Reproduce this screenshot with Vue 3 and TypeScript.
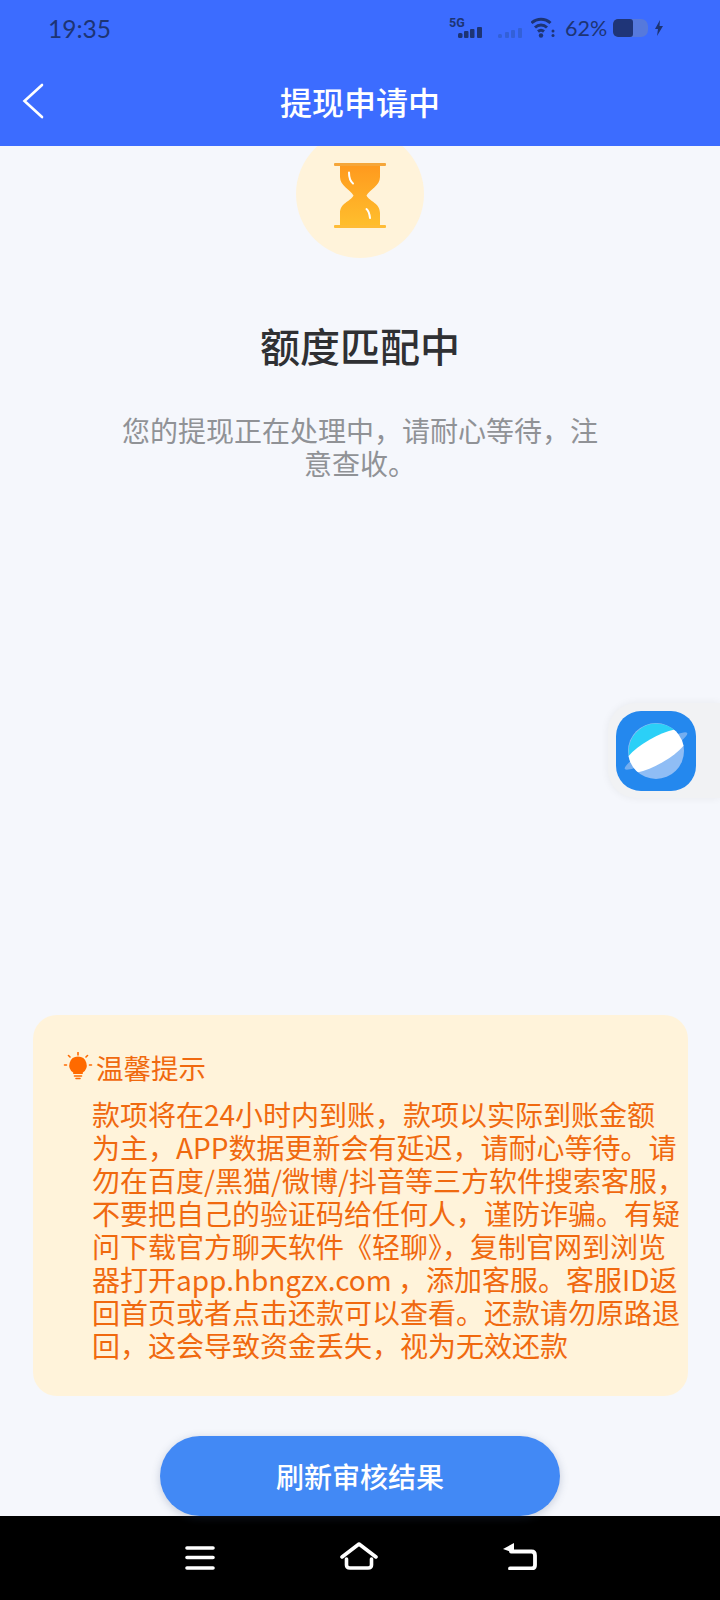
<script setup lang="ts">
const tipLines: string[] = [
  '款项将在24小时内到账，款项以实际到账金额',
  '为主，APP数据更新会有延迟，请耐心等待。请',
  '勿在百度/黑猫/微博/抖音等三方软件搜索客服，',
  '不要把自己的验证码给任何人，谨防诈骗。有疑',
  '问下载官方聊天软件《轻聊》，复制官网到浏览',
  '器打开app.hbngzx.com ，添加客服。客服ID返',
  '回首页或者点击还款可以查看。还款请勿原路退',
  '回，这会导致资金丢失，视为无效还款',
]
</script>

<template>
  <div class="page">
    <header class="top">
      <div class="status">
        <span class="time">19:35</span>
        <div class="status-right">
          <svg class="sig" width="34" height="24" viewBox="0 0 34 24">
            <text x="0" y="11" class="five-g">5G</text>
            <g fill="#1d3474">
              <rect x="9" y="17" width="4.500" height="5" rx="1.500"/>
              <rect x="15" y="15" width="4.500" height="7" rx="1"/>
              <rect x="21" y="13" width="4.500" height="9" rx="1"/>
              <rect x="28" y="11" width="5" height="11" rx="1"/>
            </g>
          </svg>
          <svg class="sig2" width="24" height="24" viewBox="0 0 24 24" fill="#3360d8">
            <rect x="0" y="18" width="4" height="4" rx="1.500"/>
            <rect x="7" y="16" width="4" height="6" rx="1"/>
            <rect x="13" y="14" width="4" height="8" rx="1"/>
            <rect x="20" y="12" width="4" height="10" rx="1"/>
          </svg>
          <svg class="wifi" width="24" height="24" viewBox="0 0 24 24" fill="none" stroke="#1d3474" stroke-width="3">
            <path d="M0.500 7C6 2 14 2 19.500 7"/>
            <path d="M4 11.500C7.500 8.300 12.500 8.300 16 11.500"/>
            <path d="M7 15.500C8.800 14 11.200 14 13 15.500"/>
            <circle cx="10" cy="19.500" r="2.200" fill="#1d3474" stroke="none"/>
            <circle cx="22" cy="15" r="1.500" fill="#1d3474" stroke="none"/>
            <circle cx="22" cy="19.500" r="1.500" fill="#1d3474" stroke="none"/>
          </svg>
          <span class="pct">62%</span>
          <div class="battery"><div class="battery-fill"></div></div>
          <svg class="bolt" width="8" height="16" viewBox="0 0 8 16"><path d="M5 0 0 9h3l-1 7 6-10H4.500z" fill="#1d3474"/></svg>
        </div>
      </div>
      <div class="nav">
        <svg class="back" width="24" height="36" viewBox="0 0 24 36" fill="none" stroke="#fff" stroke-width="2.600" stroke-linecap="round">
          <path d="M21 2 3.500 18 21 34"/>
        </svg>
        <h1 class="nav-title">提现申请中</h1>
      </div>
    </header>

    <main class="body">
      <div class="hero">
        <div class="disc">
          <svg class="glass" width="52" height="66" viewBox="0 0 52 66">
            <defs>
              <linearGradient id="glass" x1="0" y1="0" x2="0" y2="1">
                <stop offset="0" stop-color="#ff9a1e"/>
                <stop offset="1" stop-color="#ffbe2d"/>
              </linearGradient>
            </defs>
            <rect x="0" y="0" width="52" height="3" rx="1" fill="#f5a63a"/>
            <rect x="0" y="62" width="52" height="3" rx="1" fill="#ffbc36"/>
            <path d="M6 3H46V14C46 23 36 26 32.500 32.500C36 39 46 40 46 50V62H6V50C6 40 16 39 19.500 32.500C16 26 6 23 6 14Z" fill="url(#glass)"/>
            <path d="M15 9.500C15 14 16 18 19 20.500" stroke="#fff" stroke-width="2" fill="none" stroke-linecap="round"/>
            <path d="M32.500 46C35 48 35.500 51 36 55" stroke="#fff" stroke-width="2" fill="none" stroke-linecap="round"/>
          </svg>
        </div>
        <h2 class="title">额度匹配中</h2>
        <p class="desc">您的提现正在处理中，请耐心等待，注意查收。</p>
      </div>

      <section class="tip">
        <div class="tip-head">
          <svg width="30" height="30" viewBox="0 0 30 30">
            <g stroke="#ff6a00" stroke-width="1.600" stroke-linecap="round" fill="none">
              <path d="M15 0.500V3M5.500 3.500 7 5M24.500 3.500 23 5M1.500 13H3.500M26.500 13H28.500M11.500 24H18.500M13 26.500H17"/>
            </g>
            <path d="M15 4.500a8.800 8.800 0 0 1 4.800 16.100V22H10.200v-1.400A8.800 8.800 0 0 1 15 4.500z" fill="#ff6a00"/>
          </svg>
          <span class="tip-title">温馨提示</span>
        </div>
        <div class="tip-text">
          <div v-for="line in tipLines" :key="line" class="tip-line">{{ line }}</div>
        </div>
      </section>

      <div class="action"><button class="refresh">刷新审核结果</button></div>

      <aside class="float">
        <div class="app-icon">
          <svg width="80" height="80" viewBox="0 0 80 80">
            <defs>
              <clipPath id="planet"><circle cx="40" cy="40" r="28"/></clipPath>
            </defs>
            <rect width="80" height="80" rx="25" fill="#2488ee"/>
            <g transform="rotate(-30 40 40)">
              <ellipse cx="40" cy="40" rx="36" ry="6" fill="#74aef0"/>
            </g>
            <circle cx="40" cy="40" r="28" fill="#8fbdf5"/>
            <path d="M15.500 53A28 28 0 0 1 59 19.500z" fill="#2bd0f7"/>
            <g clip-path="url(#planet)">
              <g transform="rotate(-30 40 40)">
                <ellipse cx="40" cy="40" rx="38" ry="13" fill="#fff"/>
              </g>
            </g>
          </svg>
        </div>
      </aside>
    </main>

    <footer class="sysbar">
      <svg width="30" height="28" viewBox="0 0 30 28" fill="none" stroke="#fff" stroke-width="3.600" stroke-linecap="round">
        <path d="M2 6H28M2 15.500H28M2 26H28"/>
      </svg>
      <svg width="38" height="28" viewBox="0 0 38 28" fill="none" stroke="#fff" stroke-width="3.600" stroke-linecap="round" stroke-linejoin="round">
        <path d="M2 15 19 2 36 15M6.500 17V23Q6.500 26 10 26H28Q31.500 26 31.500 23V17"/>
      </svg>
      <svg width="34" height="28" viewBox="0 0 34 28" fill="none">
        <path d="M8 9.500H28.500Q32 9.500 32 13.500V23Q32 26.500 28.500 26.500H7" stroke="#fff" stroke-width="3.800" stroke-linecap="round" stroke-linejoin="round"/>
        <path d="M0 7 11 1V11Z" fill="#fff"/>
      </svg>
    </footer>
  </div>
</template>

<style>
html, body { margin: 0; padding: 0; }
</style>

<style scoped>
.page {
  width: 720px;
  height: 1600px;
  display: flex;
  flex-direction: column;
  overflow: hidden;
  background: #f5f7fc;
  font-family: "Noto Sans CJK SC", sans-serif;
}
.top { position: relative; z-index: 2; background: #3c6cff; height: 146px; flex: none; }
.status {
  height: 56px;
  display: flex;
  align-items: center;
  justify-content: space-between;
  padding: 0 57px 0 48px;
  color: #1d3474;
}
.time { font-family: "Lato", sans-serif; font-size: 24.500px; }
.status-right { display: flex; align-items: center; }
.five-g { font: 700 12.500px "Roboto", sans-serif; fill: #1d3474; }
.sig { margin-right: 15px; }
.sig2 { margin-right: 9px; }
.wifi { margin-right: 10px; }
.pct { font-family: "Lato", sans-serif; font-size: 21.500px; width: 40px; margin-right: 8px; white-space: nowrap; }
.battery { width: 35px; height: 18px; border-radius: 5px 7px 7px 5px; background: #5679dc; overflow: hidden; }
.battery-fill { width: 20px; height: 18px; background: #1f3578; border-radius: 4px 3px 3px 4px; }
.bolt { margin-left: 7px; }
.nav { position: relative; height: 90px; display: flex; align-items: center; justify-content: center; }
.back { position: absolute; left: 21px; top: 27px; }
.nav-title { margin: 0; color: #fff; font-size: 32px; font-weight: 500; line-height: 90px; }
.body { position: relative; flex: 1; min-height: 0; display: flex; flex-direction: column; }
.hero { height: 869px; display: flex; flex-direction: column; align-items: center; flex: none; }
.disc {
  width: 128px;
  height: 128px;
  margin-top: -16px;
  border-radius: 50%;
  background: #fff3da;
  display: flex;
  align-items: center;
  justify-content: center;
  flex: none;
}
.glass { margin-top: 3px; }
.title { margin: 59px 0 0; font-size: 40px; font-weight: 500; color: #2f3033; line-height: 56px; }
.desc { margin: 41px 0 0; width: 476px; font-size: 28px; line-height: 33px; color: #909296; text-align: center; }
.tip {
  margin: 0 32px 0 33px;
  height: 381px;
  flex: none;
  box-sizing: border-box;
  padding: 35px 0 0 30px;
  background: #fff3da;
  border-radius: 24px;
  color: #f0690f;
}
.tip-head { display: flex; align-items: center; gap: 3px; height: 34px; }
.tip-title { font-size: 27.500px; line-height: 34px; }
.tip-text { margin: 14px 0 0 29px; font-size: 28px; line-height: 33px; }
.tip-line { white-space: nowrap; }
.action { display: flex; justify-content: center; margin-top: 40px; }
.refresh {
  width: 400px;
  height: 80px;
  flex: none;
  border: 0;
  border-radius: 40px;
  background: #4289f5;
  color: #fff;
  font-family: inherit;
  font-size: 28px;
  font-weight: 500;
  box-shadow: 0 2px 8px rgba(60, 80, 120, 0.25);
}
.float {
  position: absolute;
  right: 0;
  top: 557px;
  width: 112px;
  height: 95px;
  background: #f1f2f4;
  border-radius: 28px 0 0 28px;
  box-shadow: 0 0 8px rgba(0, 0, 0, 0.06);
  display: flex;
  align-items: center;
  padding-left: 8px;
  box-sizing: border-box;
}
.app-icon { width: 80px; height: 80px; display: flex; }
.sysbar {
  height: 84px;
  flex: none;
  background: #000;
  display: flex;
  align-items: center;
  justify-content: center;
  gap: 125px;
  padding: 0 0 4px 2px;
  box-sizing: border-box;
}
</style>
